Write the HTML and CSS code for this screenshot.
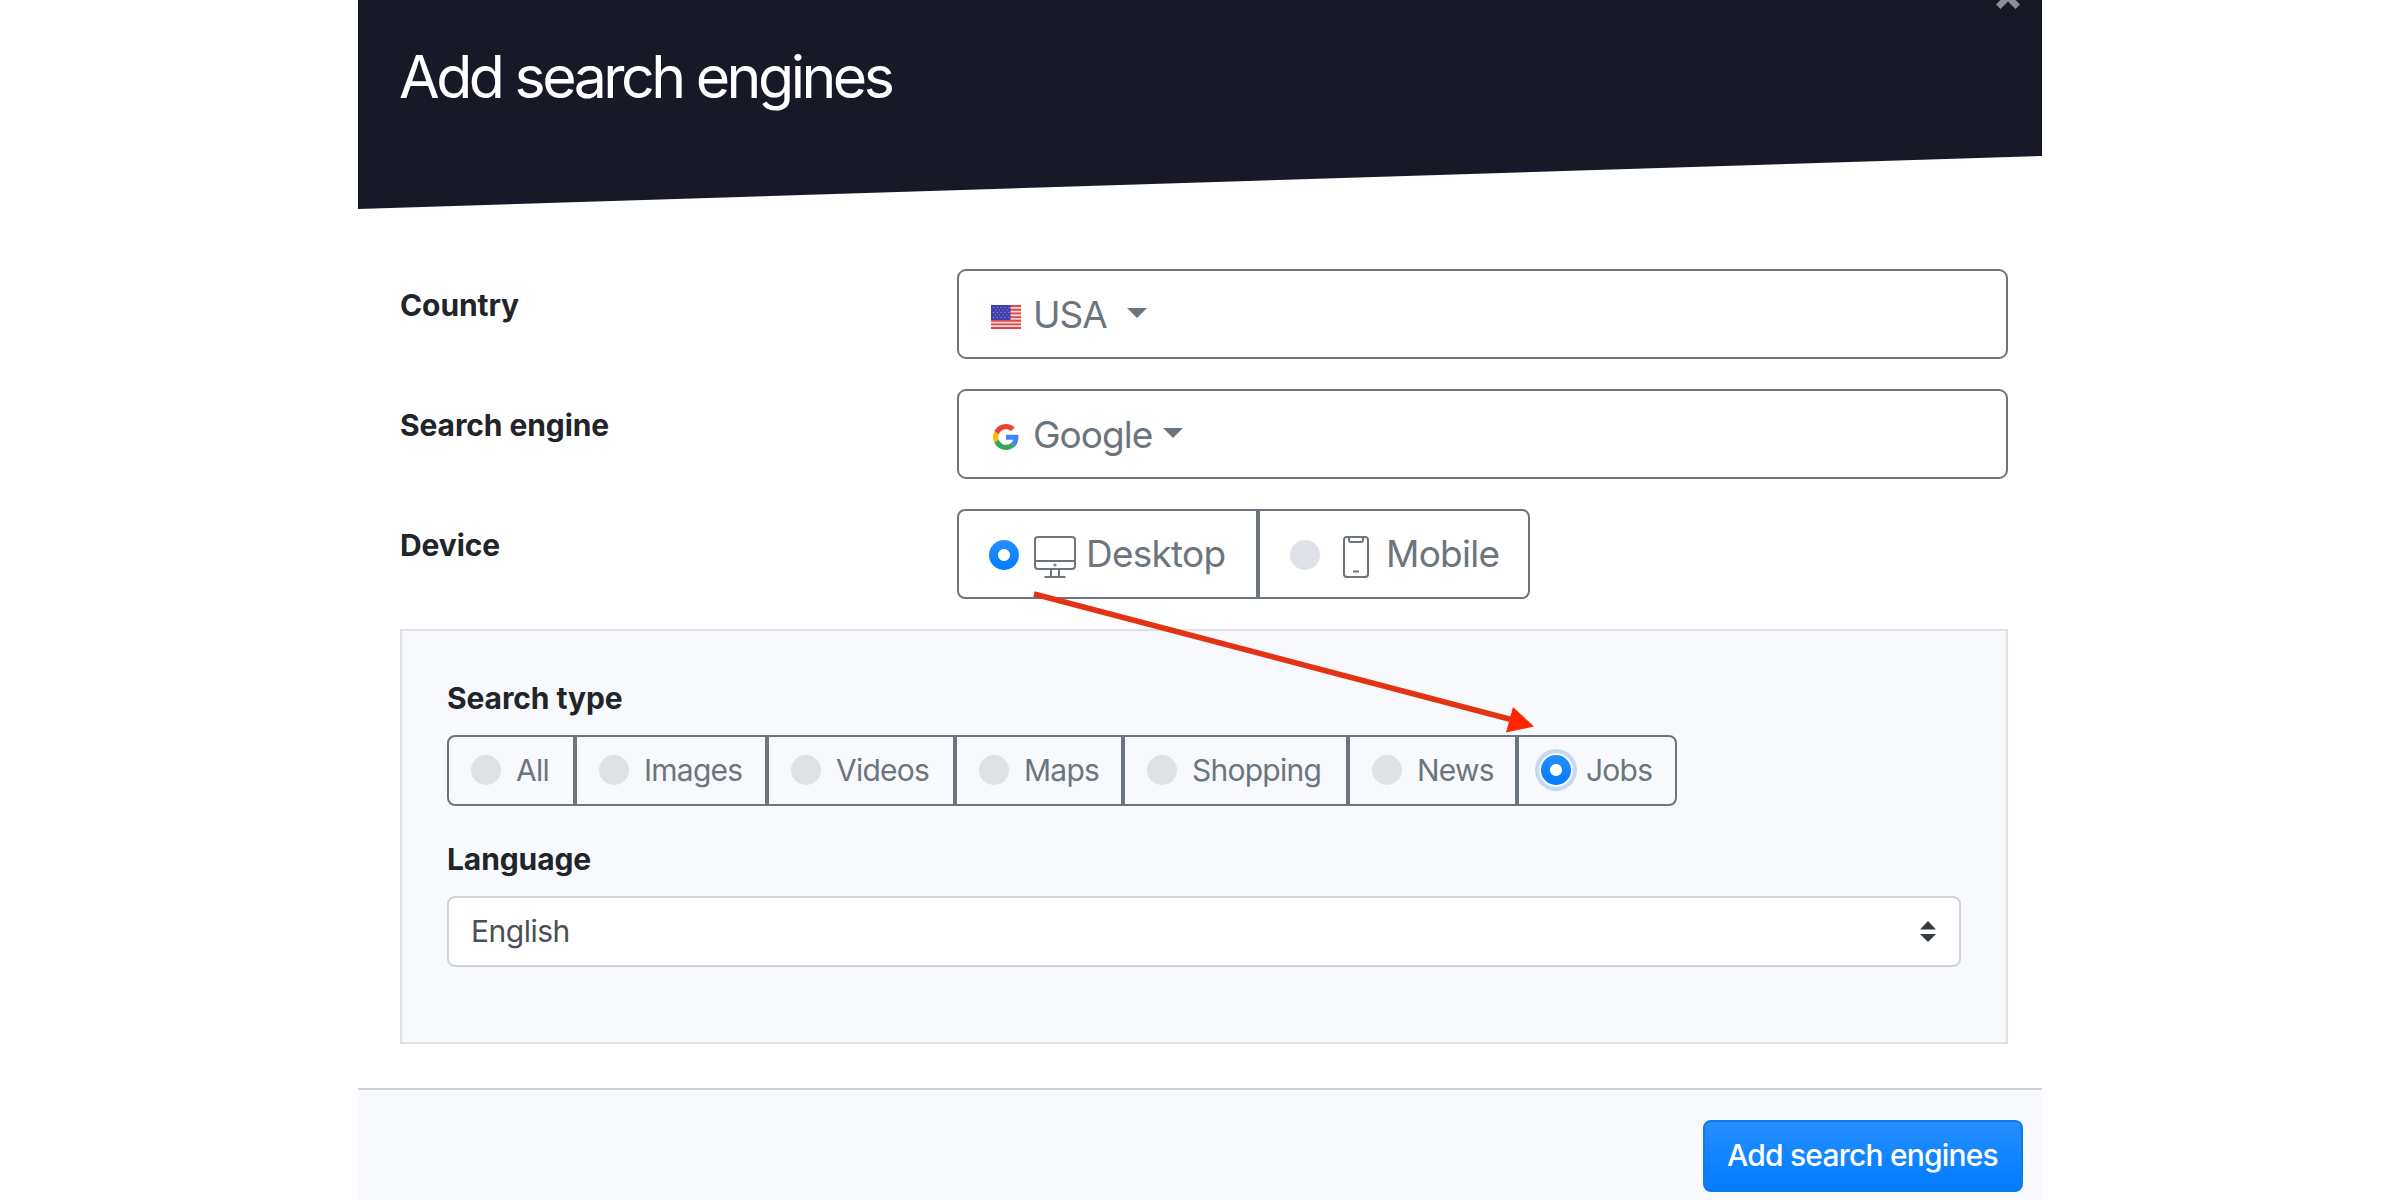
FILE: index.html
```html
<!DOCTYPE html>
<html lang="en">

<head>
  <meta charset="UTF-8">
  <meta name="viewport" content="width=device-width, initial-scale=1.0">
  <title>Add search engines</title>
  <link rel="stylesheet" href="styles.css">
</head>

<body>
  <div class="modal">
    <header class="modal-header">
      <h1 class="modal-title">Add search engines</h1>
      <svg class="close" viewBox="0 0 24 24"><path d="M3 3L21 21M21 3L3 21" /></svg>
    </header>

    <main class="modal-body">
      <div class="form-row">
        <div class="form-label">Country</div>
        <div class="dropdown">
          <svg class="flag" viewBox="0 0 30 24">
            <rect width="30" height="24" fill="#f9d5d5" />
            <path d="M0 1H30M0 4.7H30M0 8.4H30M0 12.1H30M0 15.8H30M0 19.4H30M0 23H30" stroke="#d9484b" stroke-width="1.9" />
            <rect width="19.5" height="15" fill="#3f3fae" />
            <path d="M2 2.5H19M4 5H19M2 7.5H19M4 10H19M2 12.5H19" stroke="#8f90d6" stroke-width="1.1" stroke-dasharray="1.2 2.6" />
          </svg>
          <span>USA</span>
          <i class="caret caret-far"></i>
        </div>
      </div>

      <div class="form-row">
        <div class="form-label">Search engine</div>
        <div class="dropdown">
          <svg class="google" viewBox="0 0 48 48">
            <path fill="#ea4335" d="M24 9.5c3.54 0 6.71 1.22 9.21 3.6l6.85-6.85C35.9 2.38 30.47 0 24 0 14.62 0 6.51 5.38 2.56 13.22l7.98 6.19C12.43 13.72 17.74 9.5 24 9.5z" />
            <path fill="#4285f4" d="M46.98 24.55c0-1.57-.15-3.09-.38-4.55H24v9.02h12.94c-.58 2.96-2.26 5.48-4.78 7.18l7.73 6c4.51-4.18 7.09-10.36 7.09-17.65z" />
            <path fill="#fbbc05" d="M10.53 28.59c-.48-1.45-.76-2.99-.76-4.59s.27-3.14.76-4.59l-7.98-6.19C.92 16.46 0 20.12 0 24c0 3.88.92 7.54 2.56 10.78l7.97-6.19z" />
            <path fill="#34a853" d="M24 48c6.48 0 11.93-2.13 15.89-5.81l-7.73-6c-2.15 1.45-4.92 2.3-8.16 2.3-6.26 0-11.57-4.22-13.47-9.91l-7.98 6.19C6.51 42.62 14.62 48 24 48z" />
          </svg>
          <span>Google</span>
          <i class="caret"></i>
        </div>
      </div>

      <div class="form-row">
        <div class="form-label">Device</div>
        <div class="btn-group btn-group-lg">
          <div class="btn desktop">
            <i class="radio checked"></i>
            <svg class="icon-desktop" viewBox="0 0 42 42">
              <rect x="1" y="1" width="40" height="32" rx="3" />
              <path d="M1 25H41M17 33V41M25 33V41M10.500 41H31.500" />
              <circle cx="21" cy="29" r=".6" />
            </svg>
            <span>Desktop</span>
          </div>
          <div class="btn mobile">
            <i class="radio"></i>
            <svg class="icon-mobile" viewBox="0 0 26 42">
              <rect x="1" y="1" width="24" height="40" rx="3" />
              <path d="M6 1V4Q6 6 8 6H18Q20 6 20 4V1M10 35.500H16" />
            </svg>
            <span>Mobile</span>
          </div>
        </div>
      </div>

      <div class="panel">
        <div class="panel-label">Search type</div>
        <div class="btn-group">
          <div class="btn all"><i class="radio"></i><span>All</span></div>
          <div class="btn images"><i class="radio"></i><span>Images</span></div>
          <div class="btn videos"><i class="radio"></i><span>Videos</span></div>
          <div class="btn maps"><i class="radio"></i><span>Maps</span></div>
          <div class="btn shopping"><i class="radio"></i><span>Shopping</span></div>
          <div class="btn news"><i class="radio"></i><span>News</span></div>
          <div class="btn jobs"><i class="radio checked focus"></i><span>Jobs</span></div>
        </div>
        <div class="panel-label">Language</div>
        <div class="select">
          <span>English</span>
          <svg class="select-arrows" viewBox="0 0 16 21"><path d="M0 8.500L8 0L16 8.500ZM0 13L8 21L16 13Z" /></svg>
        </div>
      </div>
    </main>

    <footer class="modal-footer">
      <button class="btn-primary">Add search engines</button>
    </footer>

    <!-- arrow from the device to the search type -->
    <svg class="arrow" viewBox="0 0 504 146">
      <path d="M4 6L483 132" stroke="#e43314" stroke-width="5.500" />
      <path d="M483 119L504 138.500L476 144.500Z" fill="#ff2600" />
    </svg>
  </div>
</body>

</html>
```
FILE: styles.css
```css
* {
  box-sizing: border-box;
}

body {
  margin: 0;
  height: 1200px;
  overflow: hidden;
  background: #fff;
  font-family: Inter, "Liberation Sans", sans-serif;
  font-size: 30px;
  color: #212529;
}

.modal {
  position: relative;
  width: 1684px;
  height: 1200px;
  margin: 0 auto;
  overflow: hidden;
}

.modal-header {
  display: flex;
  justify-content: space-between;
  height: 209px;
  padding: 0 21px 0 41px;
  background: #171926;
  clip-path: polygon(0 0, 100% 0, 100% 156px, 0 100%);
}

.modal-title {
  margin: 41px 0 0;
  font-size: 59px;
  line-height: 72px;
  font-weight: 400;
  letter-spacing: -3.5px;
  color: #fff;
  white-space: nowrap;
}

.close {
  width: 26px;
  height: 26px;
  margin-top: -16px;
  fill: none;
  stroke: #8b8c96;
  stroke-width: 6;
}

.modal-body {
  height: 879px;
  padding: 60px 34px 0 42px;
}

.form-row {
  display: flex;
  height: 90px;
  margin-bottom: 30px;
}

.form-label {
  width: 557px;
  padding-top: 18px;
  line-height: 36px;
  font-weight: 700;
  letter-spacing: -0.1px;
}

.dropdown {
  display: flex;
  align-items: center;
  width: 1051px;
  padding-left: 32px;
  border: 2px solid #6c757d;
  border-radius: 9px;
  font-size: 37px;
  letter-spacing: -1px;
  color: #6c757d;
}

.flag {
  width: 30px;
  height: 24px;
  margin: 6px 12px 0 0;
}

.google {
  width: 26px;
  height: 26px;
  margin: 6px 14px 0 2px;
}

.caret {
  margin: -2px 0 0 11px;
  border: 10px solid transparent;
  border-top-color: #6c757d;
  border-bottom: 0;
}

.caret-far {
  margin-left: 20px;
}

.btn-group {
  display: flex;
  width: 1230px;
  height: 71px;
  border-radius: 8px;
  letter-spacing: -0.75px;
  color: #6c757d;
}

.btn {
  display: flex;
  align-items: center;
  padding-left: 22px;
  border: 2px solid #6c757d;
  white-space: nowrap;
}

.btn span,
.select span {
  margin-top: -2px;
}

.btn:first-child {
  border-radius: 8px 0 0 8px;
}

.btn:last-child {
  border-radius: 0 8px 8px 0;
}

.radio {
  flex: none;
  width: 30px;
  height: 30px;
  margin: -1px 15px 0 0;
  border-radius: 50%;
  background: #dee2e6;
}

.checked {
  background: radial-gradient(circle, #fff 5.5px, transparent 6.5px), linear-gradient(#268fff, #007bff);
}

.focus {
  box-shadow: 0 0 0 2px #f7f9fc, 0 0 0 6px #c5d9f5;
}

.btn-group-lg {
  width: 573px;
  height: 90px;
  font-size: 37px;
}

.btn-group-lg .btn {
  padding-left: 30px;
}

.btn-group-lg .radio {
  margin-top: 1px;
}

.desktop {
  width: 301px;
}

.mobile {
  width: 272px;
}

.icon-desktop,
.icon-mobile {
  height: 42px;
  margin-top: 6px;
  fill: none;
  stroke: #6c757d;
  stroke-width: 2;
}

.icon-desktop {
  width: 42px;
  margin-right: 10px;
}

.icon-mobile {
  width: 26px;
  margin: 6px 17px 0 8px;
}

.panel {
  width: 1608px;
  height: 415px;
  padding: 47px 45px 0;
  border: 2px solid #dee2e6;
  background: #f7f9fc;
}

.panel-label {
  height: 57px;
  line-height: 40px;
  font-weight: 700;
  letter-spacing: -0.1px;
}

.panel .btn-group {
  margin-bottom: 33px;
}

.all {
  width: 128px;
}

.images {
  width: 192px;
}

.videos {
  width: 188px;
}

.maps {
  width: 168px;
}

.shopping {
  width: 225px;
}

.news {
  width: 169px;
}

.jobs {
  width: 160px;
}

.select {
  display: flex;
  justify-content: space-between;
  align-items: center;
  height: 71px;
  padding: 0 23px 0 22px;
  border: 2px solid #ced4da;
  border-radius: 8px;
  background: #fff;
  letter-spacing: -0.5px;
  color: #495057;
}

.select-arrows {
  width: 16px;
  height: 21px;
  margin-top: -1px;
  fill: #343a40;
}

.modal-footer {
  display: flex;
  justify-content: flex-end;
  height: 112px;
  padding: 30px 19px 0 0;
  border-top: 2px solid #cfd3d9;
  background: #f7f9fd;
}

.btn-primary {
  width: 320px;
  height: 72px;
  padding: 0 1px 2px 0;
  border: 2px solid #0f7bea;
  border-radius: 8px;
  background: linear-gradient(#268fff, #007bff);
  font-family: inherit;
  font-size: 30px;
  font-weight: 500;
  letter-spacing: -0.8px;
  color: #fff;
  white-space: nowrap;
}

.arrow {
  position: absolute;
  left: 672px;
  top: 588px;
  width: 504px;
  height: 146px;
  fill: none;
}
```
